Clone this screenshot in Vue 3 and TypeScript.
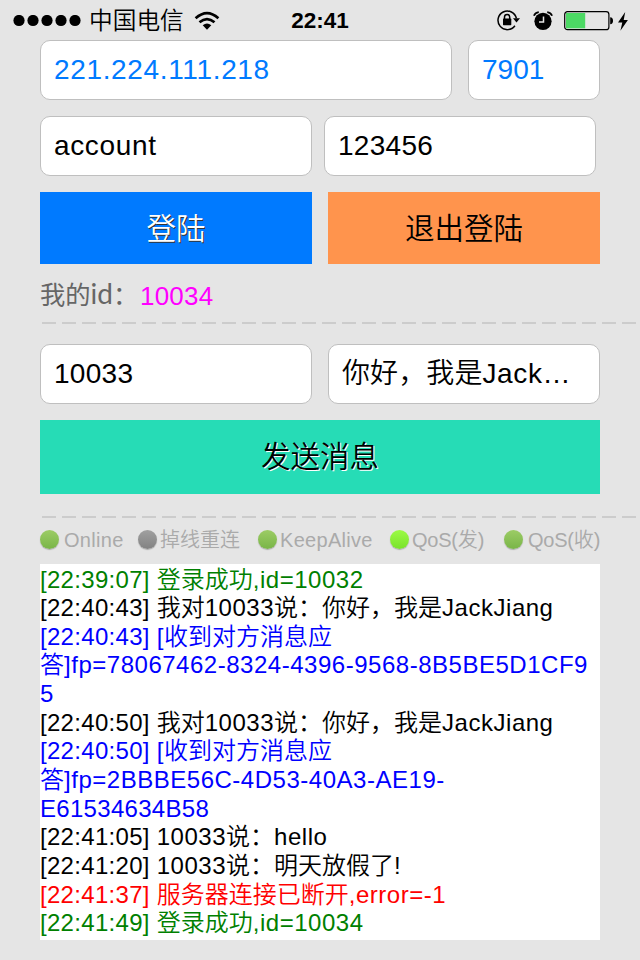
<script setup lang="ts">
interface Run { text: string; kind: 'stamp' | 'code' | 'latin' | 'cjk' }
interface Entry { tone: 'ok' | 'plain' | 'ack' | 'fail'; lines: string[] }

const logEntries: Entry[] = [
  { tone: 'ok', lines: ['[22:39:07] 登录成功,id=10032'] },
  { tone: 'plain', lines: ['[22:40:43] 我对10033说：你好，我是JackJiang'] },
  { tone: 'ack', lines: ['[22:40:43] [收到对方消息应', '答]fp=78067462-8324-4396-9568-8B5BE5D1CF9', '5'] },
  { tone: 'plain', lines: ['[22:40:50] 我对10033说：你好，我是JackJiang'] },
  { tone: 'ack', lines: ['[22:40:50] [收到对方消息应', '答]fp=2BBBE56C-4D53-40A3-AE19-', 'E61534634B58'] },
  { tone: 'plain', lines: ['[22:41:05] 10033说：hello'] },
  { tone: 'plain', lines: ['[22:41:20] 10033说：明天放假了!'] },
  { tone: 'fail', lines: ['[22:41:37] 服务器连接已断开,error=-1'] },
  { tone: 'ok', lines: ['[22:41:49] 登录成功,id=10034'] },
]

const indicators = [
  { key: 'online', label: 'Online', lamp: 'green' },
  { key: 'reconnect', label: '掉线重连', lamp: 'gray' },
  { key: 'alive', label: 'KeepAlive', lamp: 'green' },
  { key: 'outgoing', label: 'QoS(发)', lamp: 'bright' },
  { key: 'incoming', label: 'QoS(收)', lamp: 'green' },
]

// Splits a line into timestamp, code, Latin and CJK runs so each gets its own tracking.
function runs(line: string): Run[] {
  const parts = line.match(/\[[\d:]+\] |[\x20-\x7e]+|[^\x20-\x7e]+/g) ?? []
  return parts.map((text) => ({
    text,
    kind: /^\[\d/.test(text) ? 'stamp'
      : /^[0-9A-F]{12}$/.test(text) ? 'code'
      : /^[\x20-\x7e]/.test(text) ? 'latin' : 'cjk',
  }))
}
</script>

<template>
  <main class="screen" lang="zh-CN">
    <header class="statusbar">
      <div class="carrier">
        <svg class="signal" width="70" height="12" viewBox="0 0 70 12">
          <circle v-for="n in 5" :key="n" :cx="n * 14 - 8" cy="5.5" r="5.6" />
        </svg>
        <span class="carrier-name">中国电信</span>
        <svg class="wifi" width="26" height="20" viewBox="0 0 26 20">
          <path d="M1.6 7.2Q13-3 24.4 7.2M5.5 11.3Q13 4.8 20.5 11.3" fill="none" stroke="#000" stroke-width="2.7" />
          <path d="M8.7 14.2Q13 10.6 17.3 14.2L13 18.7Z" />
        </svg>
      </div>
      <span class="clock">22:41</span>
      <div class="tray">
        <svg class="lock" width="24" height="22" viewBox="0 0 24 22">
          <path d="M17.9 15.7A9.3 9.3 0 1 1 19.4 8.4" fill="none" stroke="#000" stroke-width="1.5" />
          <path d="M16 8.3H23L19.5 12.6Z" />
          <rect x="6" y="8.6" width="8.3" height="6.6" rx=".6" />
          <path d="M7.5 9.6V7a2.6 2.6 0 0 1 5.2 0V9.6" fill="none" stroke="#000" stroke-width="1.5" />
        </svg>
        <svg class="alarm" width="20" height="20" viewBox="0 0 20 20">
          <circle cx="10" cy="10.3" r="8.6" />
          <path d="M.9 4.8Q2.2 1.4 5.8 1.1M14.2 1.1Q17.8 1.4 19.1 4.8" fill="none" stroke="#000" stroke-width="1.7" />
          <path d="M10.5 5.6V11.1H6" fill="none" stroke="#e5e5e5" stroke-width="1.5" />
        </svg>
        <svg class="battery" width="50" height="20" viewBox="0 0 50 20">
          <rect x=".7" y=".7" width="44.2" height="18" rx="2.8" fill="none" stroke="#000" stroke-width="1.2" />
          <rect x="2" y="2" width="19.2" height="15.3" fill="#4cd964" />
          <path d="M46.2 6.2Q49 6.5 49 9.7T46.2 13.2Z" />
        </svg>
        <svg class="bolt" width="10" height="19" viewBox="0 0 10 19">
          <path d="M7.2 0L0 10.5H4.3L2.4 18.8L9.9 8.1H5.7Z" />
        </svg>
      </div>
    </header>

    <section class="row server">
      <div class="field blue host">221.224.111.218</div>
      <div class="field blue port">7901</div>
    </section>
    <section class="row account">
      <div class="field user">account</div>
      <div class="field">123456</div>
    </section>
    <section class="row session">
      <button class="btn login" type="button">登陆</button>
      <button class="btn logout" type="button">退出登陆</button>
    </section>

    <div class="identity">
      <span class="identity-label">我的<span class="thin">id</span>：</span>
      <span class="identity-value">10034</span>
    </div>
    <div class="divider"></div>

    <section class="row message">
      <div class="field">10033</div>
      <div class="field preview"><span class="preview-cjk">你好，我是</span>Jack…</div>
    </section>
    <button class="btn send" type="button">发送消息</button>
    <div class="divider"></div>

    <ul class="indicators">
      <li v-for="item in indicators" :key="item.key" :class="item.key">
        <i class="lamp" :class="item.lamp"></i>
        <span v-for="(run, i) in runs(item.label)" :key="i" :class="run.kind">{{ run.text }}</span>
      </li>
    </ul>

    <section class="log">
      <div v-for="(entry, e) in logEntries" :key="e" :class="entry.tone">
        <p v-for="(line, l) in entry.lines" :key="l">
          <span v-for="(run, i) in runs(line)" :key="i" :class="run.kind">{{ run.text }}</span>
        </p>
      </div>
    </section>
  </main>
</template>

<style>
body { background: #e5e5e5; }
</style>

<style scoped>
.screen {
  width: 640px;
  height: 960px;
  box-sizing: border-box;
  overflow: hidden;
  background: #e5e5e5;
  color: #000;
  font-family: "Liberation Sans", "Noto Sans CJK SC", sans-serif;
  font-weight: 350;
}
svg { display: block; flex: none; }
.statusbar {
  display: grid;
  grid-template-columns: 290px 60px 290px;
  height: 40px;
  align-items: center;
}
.carrier { display: flex; align-items: center; padding-left: 12.5px; }
.carrier-name { margin-left: 6.5px; width: 98px; font-size: 23.7px; line-height: 40px; white-space: nowrap; }
.wifi { margin-left: 6.5px; }
.clock { font-size: 22.5px; font-weight: 700; line-height: 42px; letter-spacing: 0; text-align: center; white-space: nowrap; }
.tray { display: flex; align-items: center; padding-left: 147px; }
.alarm { margin-left: 12px; }
.battery { margin-left: 11px; }
.bolt { margin-left: 4px; }
.row { display: grid; margin: 0 40px 16px; height: 60px; }
.server { grid-template-columns: 412px 132px; gap: 16px; }
.account { grid-template-columns: 272px 272px; gap: 12px; }
.session { grid-template-columns: 272px 272px; gap: 16px; height: 72px; margin-bottom: 12px; }
.message { grid-template-columns: 272px 272px; gap: 16px; margin-top: 20px; }
.field {
  box-sizing: border-box;
  height: 60px;
  padding: 0 13px;
  border: 1px solid #bfbfbf;
  border-radius: 10px;
  background: #fff;
  font-size: 28px;
  line-height: 58px;
  letter-spacing: .3px;
  white-space: nowrap;
  overflow: hidden;
}
.host, .user { letter-spacing: .65px; }
.preview { letter-spacing: .6px; }
.port { letter-spacing: 0; }
.blue { color: #007aff; }
.preview-cjk { letter-spacing: .1px; }
.btn {
  display: block;
  border: 0;
  border-radius: 0;
  padding: 0 0 4px;
  font: inherit;
  font-size: 29.5px;
  color: #000;
}
.login { background: #007aff; color: #fff; text-shadow: 1px 1px 0 #333; }
.logout { background: #ff944d; }
.send { width: 560px; height: 74px; margin: 0 40px 22px; padding-bottom: 6px; background: #26dcb6; text-shadow: 1px 1px 0 #fff; }
.identity { display: flex; align-items: flex-start; height: 46px; padding-left: 40px; }
.identity-label { width: 100px; color: #666; font-size: 25.3px; font-weight: 400; line-height: 38px; white-space: nowrap; }
.thin { font-family: Lato, sans-serif; font-weight: 400; font-size: 28px; line-height: 1; }
.identity-value { color: #f0f; font-size: 26px; line-height: 40px; letter-spacing: .2px; }
.divider {
  height: 2px;
  margin-left: 42px;
  background: repeating-linear-gradient(90deg, #ccc 0 14px, transparent 14px 20px);
}
.indicators {
  display: grid;
  grid-template-columns: 98px 120px 132px 114px 96px;
  list-style: none;
  margin: 0;
  padding: 0 40px;
  height: 46px;
  color: #aaa;
  font-size: 20px;
  line-height: 44px;
}
.indicators li { display: flex; align-items: center; height: 44px; white-space: nowrap; }
.indicators .latin { letter-spacing: -.25px; }
.indicators .online .latin, .indicators .alive .latin { letter-spacing: .3px; }
.lamp {
  flex: none;
  width: 19px;
  height: 19px;
  margin: 0 3px 2px 0;
  border-radius: 50%;
  box-shadow: 0 1px 1px rgba(0, 0, 0, .25);
}
.online .lamp, .incoming .lamp { margin-right: 5px; }
.green { background: linear-gradient(#9ccc65, #79b548); }
.gray { background: linear-gradient(#a0a0a0, #828282); }
.bright { background: linear-gradient(#9bfb45, #7ae22c); }
.log {
  box-sizing: border-box;
  width: 560px;
  height: 376px;
  margin: 0 40px;
  padding-top: 1.5px;
  background: #fff;
  font-size: 24px;
}
.log p { margin: 0; height: 28.65px; line-height: 28.65px; white-space: pre; }
.log .stamp, .log .code { letter-spacing: .3px; }
.log .latin { letter-spacing: .52px; }
.log .cjk { letter-spacing: 0; }
.ok { color: #008000; }
.plain { color: #000; }
.ack { color: #00f; }
.fail { color: #f00; }
</style>
